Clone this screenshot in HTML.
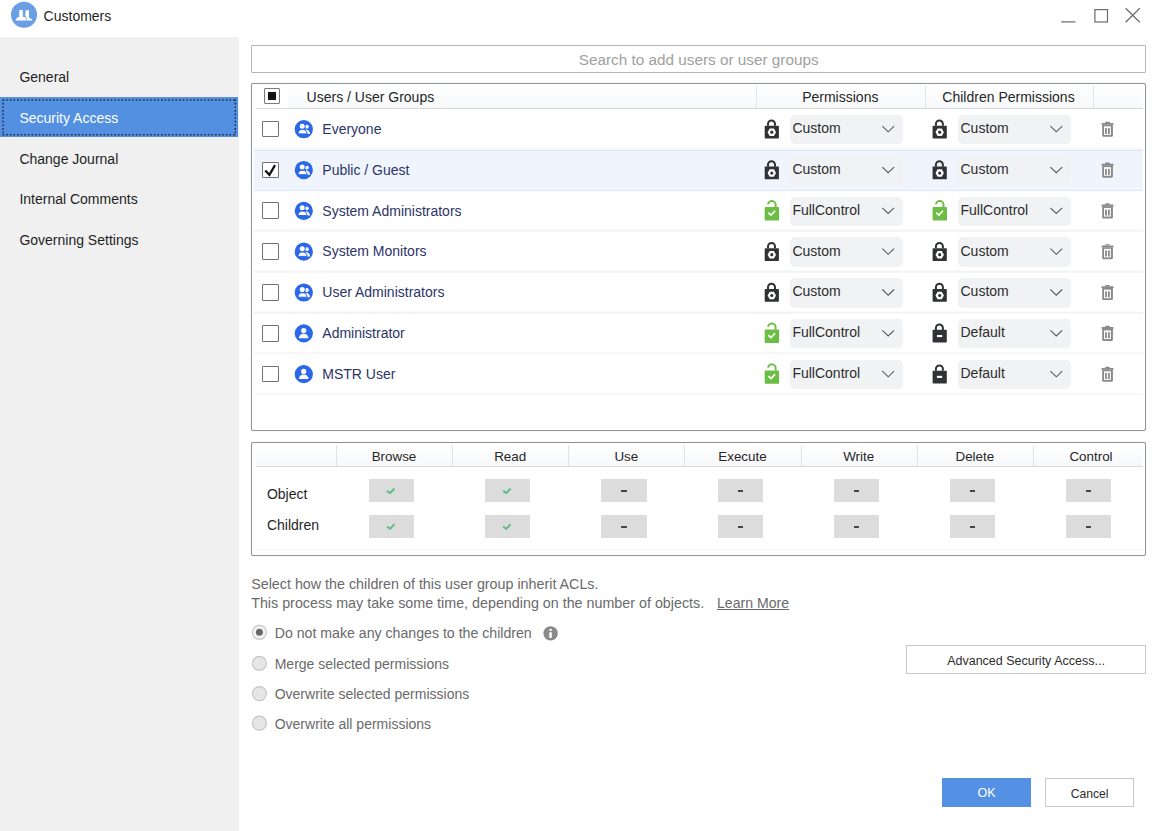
<!DOCTYPE html>
<html><head><meta charset="utf-8"><title>Customers</title>
<style>
html,body{margin:0;padding:0;}
body{width:1157px;height:831px;position:relative;overflow:hidden;background:#fff;font-family:"Liberation Sans", sans-serif;}
.t{position:absolute;white-space:nowrap;}
.b{position:absolute;}
</style></head><body>
<div class="t" style="left:43.60px;top:9.45px;font-size:14px;line-height:14px;color:#1e1e1e;">Customers</div>
<div class="b" style="left:0.00px;top:37.00px;width:239.00px;height:794.00px;background:#f0f0f0"></div>
<div class="b" style="left:0.00px;top:97.00px;width:238.00px;height:40.00px;background:#5390e2"></div>
<div class="t" style="left:19.40px;top:70.25px;font-size:14px;line-height:14px;color:#1f1f1f;">General</div>
<div class="t" style="left:19.40px;top:111.45px;font-size:14px;line-height:14px;color:#ffffff;">Security Access</div>
<div class="t" style="left:19.40px;top:151.95px;font-size:14px;line-height:14px;color:#1f1f1f;">Change Journal</div>
<div class="t" style="left:19.40px;top:192.35px;font-size:14px;line-height:14px;color:#1f1f1f;">Internal Comments</div>
<div class="t" style="left:19.40px;top:232.75px;font-size:14px;line-height:14px;color:#1f1f1f;">Governing Settings</div>
<div class="b" style="left:251.00px;top:45.00px;width:895.00px;height:28.00px;border:1px solid #b4b6ba;border-radius:1px;box-sizing:border-box;background:#fff"></div>
<div class="t" style="left:398.70px;width:600px;text-align:center;top:52.45px;font-size:15.3px;line-height:15.3px;color:#a0a0a0;">Search to add users or user groups</div>
<div class="b" style="left:251.00px;top:82.50px;width:895.00px;height:348.00px;border:1px solid #90949b;border-radius:2px;box-sizing:border-box;background:#fff;box-shadow:0 0 0.8px rgba(150,155,165,0.6)"></div>
<div class="b" style="left:288.00px;top:85.00px;width:855.00px;height:23.00px;background:linear-gradient(#ffffff,#f7f8fa)"></div>
<div class="b" style="left:256.00px;top:107.60px;width:887.00px;height:1.20px;background:#d6d7d9"></div>
<div class="b" style="left:756.30px;top:86.00px;width:1.00px;height:21.60px;background:#e3e4e6"></div>
<div class="b" style="left:924.60px;top:86.00px;width:1.00px;height:21.60px;background:#e3e4e6"></div>
<div class="b" style="left:1092.50px;top:86.00px;width:1.00px;height:21.60px;background:#e3e4e6"></div>
<div class="b" style="left:264.20px;top:88.30px;width:15.40px;height:15.40px;border:1.3px solid #7a7a7a;border-radius:1px;box-sizing:border-box;background:#fff"></div>
<div class="b" style="left:268.00px;top:92.10px;width:8.00px;height:8.10px;background:#141414"></div>
<div class="t" style="left:306.60px;top:89.75px;font-size:14px;line-height:14px;color:#262626;">Users / User Groups</div>
<div class="t" style="left:540.30px;width:600px;text-align:center;top:89.95px;font-size:14px;line-height:14px;color:#262626;">Permissions</div>
<div class="t" style="left:708.50px;width:600px;text-align:center;top:89.95px;font-size:14px;line-height:14px;color:#262626;">Children Permissions</div>
<div class="b" style="left:254.00px;top:147.63px;width:889.00px;height:2.70px;background:linear-gradient(#fefefe,#f2f2f2 55%,#f9f9f9)"></div>
<div class="b" style="left:261.70px;top:120.70px;width:17.10px;height:16.80px;border:1.4px solid #727272;border-radius:1px;box-sizing:border-box;background:#fff"></div>
<div class="t" style="left:322.30px;top:121.95px;font-size:14px;line-height:14px;color:#2b3468;">Everyone</div>
<div class="b" style="left:789.80px;top:115.00px;width:113.20px;height:29.20px;background:#f1f2f4;border-radius:5px"></div>
<div class="t" style="left:792.40px;top:121.05px;font-size:14px;line-height:14px;color:#2d2d2d;">Custom</div>
<div class="b" style="left:957.90px;top:115.00px;width:113.20px;height:29.20px;background:#f1f2f4;border-radius:5px"></div>
<div class="t" style="left:960.50px;top:121.05px;font-size:14px;line-height:14px;color:#2d2d2d;">Custom</div>
<div class="b" style="left:254.00px;top:149.53px;width:889.00px;height:41.03px;background:#f0f5fd;border-top:1px solid #dce8f8;border-bottom:1px solid #dce8f8;box-sizing:border-box"></div>
<div class="b" style="left:261.70px;top:161.53px;width:17.10px;height:16.80px;border:1.4px solid #727272;border-radius:1px;box-sizing:border-box;background:#fff"></div>
<div class="t" style="left:322.30px;top:162.78px;font-size:14px;line-height:14px;color:#2b3468;">Public / Guest</div>
<div class="b" style="left:789.80px;top:155.83px;width:113.20px;height:29.20px;background:#f1f2f4;border-radius:5px"></div>
<div class="t" style="left:792.40px;top:161.88px;font-size:14px;line-height:14px;color:#2d2d2d;">Custom</div>
<div class="b" style="left:957.90px;top:155.83px;width:113.20px;height:29.20px;background:#f1f2f4;border-radius:5px"></div>
<div class="t" style="left:960.50px;top:161.88px;font-size:14px;line-height:14px;color:#2d2d2d;">Custom</div>
<div class="b" style="left:254.00px;top:229.29px;width:889.00px;height:2.70px;background:linear-gradient(#fefefe,#f2f2f2 55%,#f9f9f9)"></div>
<div class="b" style="left:261.70px;top:202.36px;width:17.10px;height:16.80px;border:1.4px solid #727272;border-radius:1px;box-sizing:border-box;background:#fff"></div>
<div class="t" style="left:322.30px;top:203.61px;font-size:14px;line-height:14px;color:#2b3468;">System Administrators</div>
<div class="b" style="left:789.80px;top:196.66px;width:113.20px;height:29.20px;background:#f1f2f4;border-radius:5px"></div>
<div class="t" style="left:792.40px;top:202.71px;font-size:14px;line-height:14px;color:#2d2d2d;">FullControl</div>
<div class="b" style="left:957.90px;top:196.66px;width:113.20px;height:29.20px;background:#f1f2f4;border-radius:5px"></div>
<div class="t" style="left:960.50px;top:202.71px;font-size:14px;line-height:14px;color:#2d2d2d;">FullControl</div>
<div class="b" style="left:254.00px;top:270.12px;width:889.00px;height:2.70px;background:linear-gradient(#fefefe,#f2f2f2 55%,#f9f9f9)"></div>
<div class="b" style="left:261.70px;top:243.19px;width:17.10px;height:16.80px;border:1.4px solid #727272;border-radius:1px;box-sizing:border-box;background:#fff"></div>
<div class="t" style="left:322.30px;top:244.44px;font-size:14px;line-height:14px;color:#2b3468;">System Monitors</div>
<div class="b" style="left:789.80px;top:237.49px;width:113.20px;height:29.20px;background:#f1f2f4;border-radius:5px"></div>
<div class="t" style="left:792.40px;top:243.54px;font-size:14px;line-height:14px;color:#2d2d2d;">Custom</div>
<div class="b" style="left:957.90px;top:237.49px;width:113.20px;height:29.20px;background:#f1f2f4;border-radius:5px"></div>
<div class="t" style="left:960.50px;top:243.54px;font-size:14px;line-height:14px;color:#2d2d2d;">Custom</div>
<div class="b" style="left:254.00px;top:310.95px;width:889.00px;height:2.70px;background:linear-gradient(#fefefe,#f2f2f2 55%,#f9f9f9)"></div>
<div class="b" style="left:261.70px;top:284.02px;width:17.10px;height:16.80px;border:1.4px solid #727272;border-radius:1px;box-sizing:border-box;background:#fff"></div>
<div class="t" style="left:322.30px;top:285.27px;font-size:14px;line-height:14px;color:#2b3468;">User Administrators</div>
<div class="b" style="left:789.80px;top:278.32px;width:113.20px;height:29.20px;background:#f1f2f4;border-radius:5px"></div>
<div class="t" style="left:792.40px;top:284.37px;font-size:14px;line-height:14px;color:#2d2d2d;">Custom</div>
<div class="b" style="left:957.90px;top:278.32px;width:113.20px;height:29.20px;background:#f1f2f4;border-radius:5px"></div>
<div class="t" style="left:960.50px;top:284.37px;font-size:14px;line-height:14px;color:#2d2d2d;">Custom</div>
<div class="b" style="left:254.00px;top:351.78px;width:889.00px;height:2.70px;background:linear-gradient(#fefefe,#f2f2f2 55%,#f9f9f9)"></div>
<div class="b" style="left:261.70px;top:324.85px;width:17.10px;height:16.80px;border:1.4px solid #727272;border-radius:1px;box-sizing:border-box;background:#fff"></div>
<div class="t" style="left:322.30px;top:326.10px;font-size:14px;line-height:14px;color:#2b3468;">Administrator</div>
<div class="b" style="left:789.80px;top:319.15px;width:113.20px;height:29.20px;background:#f1f2f4;border-radius:5px"></div>
<div class="t" style="left:792.40px;top:325.20px;font-size:14px;line-height:14px;color:#2d2d2d;">FullControl</div>
<div class="b" style="left:957.90px;top:319.15px;width:113.20px;height:29.20px;background:#f1f2f4;border-radius:5px"></div>
<div class="t" style="left:960.50px;top:325.20px;font-size:14px;line-height:14px;color:#2d2d2d;">Default</div>
<div class="b" style="left:254.00px;top:392.61px;width:889.00px;height:2.70px;background:linear-gradient(#fefefe,#f2f2f2 55%,#f9f9f9)"></div>
<div class="b" style="left:261.70px;top:365.68px;width:17.10px;height:16.80px;border:1.4px solid #727272;border-radius:1px;box-sizing:border-box;background:#fff"></div>
<div class="t" style="left:322.30px;top:366.93px;font-size:14px;line-height:14px;color:#2b3468;">MSTR User</div>
<div class="b" style="left:789.80px;top:359.98px;width:113.20px;height:29.20px;background:#f1f2f4;border-radius:5px"></div>
<div class="t" style="left:792.40px;top:366.03px;font-size:14px;line-height:14px;color:#2d2d2d;">FullControl</div>
<div class="b" style="left:957.90px;top:359.98px;width:113.20px;height:29.20px;background:#f1f2f4;border-radius:5px"></div>
<div class="t" style="left:960.50px;top:366.03px;font-size:14px;line-height:14px;color:#2d2d2d;">Default</div>
<div class="b" style="left:251.00px;top:442.00px;width:895.00px;height:114.00px;border:1px solid #90949b;border-radius:2px;box-sizing:border-box;background:#fff;box-shadow:0 0 0.8px rgba(150,155,165,0.6)"></div>
<div class="b" style="left:255.50px;top:445.00px;width:887.50px;height:21.50px;background:linear-gradient(#ffffff,#f6f7f9)"></div>
<div class="b" style="left:255.50px;top:466.30px;width:887.50px;height:1.20px;background:#d9dadc"></div>
<div class="b" style="left:335.90px;top:444.60px;width:1.00px;height:21.70px;background:#e1e2e4"></div>
<div class="t" style="left:93.98px;width:600px;text-align:center;top:450.36px;font-size:13.4px;line-height:13.4px;color:#262626;">Browse</div>
<div class="b" style="left:368.98px;top:478.80px;width:45.20px;height:23.40px;background:#dcdcdc"></div>
<div class="b" style="left:368.98px;top:514.50px;width:45.20px;height:23.40px;background:#dcdcdc"></div>
<div class="b" style="left:452.07px;top:444.60px;width:1.00px;height:21.70px;background:#e1e2e4"></div>
<div class="t" style="left:210.15px;width:600px;text-align:center;top:450.36px;font-size:13.4px;line-height:13.4px;color:#262626;">Read</div>
<div class="b" style="left:485.15px;top:478.80px;width:45.20px;height:23.40px;background:#dcdcdc"></div>
<div class="b" style="left:485.15px;top:514.50px;width:45.20px;height:23.40px;background:#dcdcdc"></div>
<div class="b" style="left:568.24px;top:444.60px;width:1.00px;height:21.70px;background:#e1e2e4"></div>
<div class="t" style="left:326.33px;width:600px;text-align:center;top:450.36px;font-size:13.4px;line-height:13.4px;color:#262626;">Use</div>
<div class="b" style="left:601.33px;top:478.80px;width:45.20px;height:23.40px;background:#dcdcdc"></div>
<div class="b" style="left:621.33px;top:490.40px;width:5.40px;height:1.70px;background:#454545"></div>
<div class="b" style="left:601.33px;top:514.50px;width:45.20px;height:23.40px;background:#dcdcdc"></div>
<div class="b" style="left:621.33px;top:526.10px;width:5.40px;height:1.70px;background:#454545"></div>
<div class="b" style="left:684.41px;top:444.60px;width:1.00px;height:21.70px;background:#e1e2e4"></div>
<div class="t" style="left:442.50px;width:600px;text-align:center;top:450.36px;font-size:13.4px;line-height:13.4px;color:#262626;">Execute</div>
<div class="b" style="left:717.50px;top:478.80px;width:45.20px;height:23.40px;background:#dcdcdc"></div>
<div class="b" style="left:737.50px;top:490.40px;width:5.40px;height:1.70px;background:#454545"></div>
<div class="b" style="left:717.50px;top:514.50px;width:45.20px;height:23.40px;background:#dcdcdc"></div>
<div class="b" style="left:737.50px;top:526.10px;width:5.40px;height:1.70px;background:#454545"></div>
<div class="b" style="left:800.58px;top:444.60px;width:1.00px;height:21.70px;background:#e1e2e4"></div>
<div class="t" style="left:558.66px;width:600px;text-align:center;top:450.36px;font-size:13.4px;line-height:13.4px;color:#262626;">Write</div>
<div class="b" style="left:833.66px;top:478.80px;width:45.20px;height:23.40px;background:#dcdcdc"></div>
<div class="b" style="left:853.66px;top:490.40px;width:5.40px;height:1.70px;background:#454545"></div>
<div class="b" style="left:833.66px;top:514.50px;width:45.20px;height:23.40px;background:#dcdcdc"></div>
<div class="b" style="left:853.66px;top:526.10px;width:5.40px;height:1.70px;background:#454545"></div>
<div class="b" style="left:916.75px;top:444.60px;width:1.00px;height:21.70px;background:#e1e2e4"></div>
<div class="t" style="left:674.84px;width:600px;text-align:center;top:450.36px;font-size:13.4px;line-height:13.4px;color:#262626;">Delete</div>
<div class="b" style="left:949.84px;top:478.80px;width:45.20px;height:23.40px;background:#dcdcdc"></div>
<div class="b" style="left:969.84px;top:490.40px;width:5.40px;height:1.70px;background:#454545"></div>
<div class="b" style="left:949.84px;top:514.50px;width:45.20px;height:23.40px;background:#dcdcdc"></div>
<div class="b" style="left:969.84px;top:526.10px;width:5.40px;height:1.70px;background:#454545"></div>
<div class="b" style="left:1032.92px;top:444.60px;width:1.00px;height:21.70px;background:#e1e2e4"></div>
<div class="t" style="left:791.01px;width:600px;text-align:center;top:450.36px;font-size:13.4px;line-height:13.4px;color:#262626;">Control</div>
<div class="b" style="left:1066.01px;top:478.80px;width:45.20px;height:23.40px;background:#dcdcdc"></div>
<div class="b" style="left:1086.01px;top:490.40px;width:5.40px;height:1.70px;background:#454545"></div>
<div class="b" style="left:1066.01px;top:514.50px;width:45.20px;height:23.40px;background:#dcdcdc"></div>
<div class="b" style="left:1086.01px;top:526.10px;width:5.40px;height:1.70px;background:#454545"></div>
<div class="b" style="left:255.50px;top:548.50px;width:887.50px;height:1.00px;background:#f4f4f5"></div>
<div class="t" style="left:266.90px;top:486.85px;font-size:14px;line-height:14px;color:#1f1f1f;">Object</div>
<div class="t" style="left:266.90px;top:518.25px;font-size:14px;line-height:14px;color:#1f1f1f;">Children</div>
<div class="t" style="left:251.20px;top:576.60px;font-size:14.3px;line-height:14.3px;color:#6a6a6a;">Select how the children of this user group inherit ACLs.</div>
<div class="t" style="left:251.20px;top:595.50px;font-size:14.3px;line-height:14.3px;color:#6a6a6a;">This process may take some time, depending on the number of objects.</div>
<div class="t" style="left:717.00px;top:595.66px;font-size:14.1px;line-height:14.1px;color:#6a6a6a;text-decoration:underline;">Learn More</div>
<div class="t" style="left:274.70px;top:625.82px;font-size:14.15px;line-height:14.15px;color:#6a6a6a;">Do not make any changes to the children</div>
<div class="t" style="left:274.70px;top:656.85px;font-size:14px;line-height:14px;color:#6a6a6a;">Merge selected permissions</div>
<div class="t" style="left:274.70px;top:687.15px;font-size:14px;line-height:14px;color:#6a6a6a;">Overwrite selected permissions</div>
<div class="t" style="left:274.70px;top:716.65px;font-size:14px;line-height:14px;color:#6a6a6a;">Overwrite all permissions</div>
<div class="b" style="left:906.20px;top:644.70px;width:239.40px;height:28.90px;border:1px solid #c9c9c9;box-sizing:border-box;background:#fff"></div>
<div class="t" style="left:726.00px;width:600px;text-align:center;top:654.52px;font-size:12.5px;line-height:12.5px;color:#2d2d2d;">Advanced Security Access...</div>
<div class="b" style="left:942.10px;top:777.60px;width:88.60px;height:29.60px;background:#5490e3"></div>
<div class="t" style="left:686.60px;width:600px;text-align:center;top:787.43px;font-size:12.6px;line-height:12.6px;color:#ffffff;">OK</div>
<div class="b" style="left:1045.20px;top:777.60px;width:88.70px;height:29.60px;border:1px solid #c9c9c9;box-sizing:border-box;background:#fff"></div>
<div class="t" style="left:789.60px;width:600px;text-align:center;top:787.77px;font-size:12.2px;line-height:12.2px;color:#2d2d2d;">Cancel</div>
<svg class="b" style="left:0;top:0" width="1157" height="831" viewBox="0 0 1157 831">
<circle cx="24" cy="14.8" r="13" fill="#6a9ee5"/>
<rect x="19.2" y="10" width="3.7" height="8" rx="1" fill="#fff"/>
<path d="M25.6 10.2h3.4v8.3h-3.6v-3.2q-1 -0.8 0.2 -2z" fill="#fff"/>
<path d="M15.6 20.5Q16.2 17.4 19.5 17h5.6q1.2 0.2 1.4 1h2.8q2.6 0.3 3.2 2.5z" fill="#fff"/>
<path d="M25.4 16.2L26.7 19.6" stroke="#6a9ee5" stroke-width="0.9"/>
<path d="M1061.2 21.9h14.3" stroke="#6b6b6b" stroke-width="1.2"/>
<rect x="1094.9" y="9.6" width="12.6" height="12.4" fill="none" stroke="#6b6b6b" stroke-width="1.2"/>
<path d="M1125.6 8.2L1139.8 22.2M1139.8 8.2L1125.6 22.2" stroke="#6b6b6b" stroke-width="1.2"/>
<path d="M2.6 99.9H236M2.6 134.8H236M3.1 99.2V135.5M235.3 99.2V135.5" fill="none" stroke="#27324a" stroke-width="1.5" stroke-dasharray="1.7 1.9"/>
<circle cx="303.8" cy="129.20" r="9.1" fill="#2b67e9"/>
<circle cx="306.9" cy="126.70" r="1.9" fill="#fff"/>
<path d="M304.5 133.90H310Q309.8 130.10 306 129.50Z" fill="#fff"/>
<circle cx="302.2" cy="126.20" r="3.4" fill="#2b67e9"/>
<circle cx="302.2" cy="126.20" r="2.5" fill="#fff"/>
<path d="M297.9 133.90Q298.3 129.50 302.5 129.40Q306.7 129.50 307.2 133.90Z" fill="#fff" stroke="#2b67e9" stroke-width="1"/>
<path d="M882.30 126.20l5.9 5.6l5.9 -5.6" fill="none" stroke="#5a5a5a" stroke-width="1.1"/>
<path d="M768.00 125.80V123.90a3.5 3.5 0 0 1 7 0V125.80" fill="none" stroke="#313235" stroke-width="2"/>
<rect x="764.70" y="125.70" width="14.2" height="12.8" rx="0.7" fill="#313235"/>
<path d="M767.60 132.20L769.70 128.50H773.90L776.00 132.20L773.90 135.90H769.70Z" fill="#fff"/>
<circle cx="771.80" cy="132.20" r="1.6" fill="#313235"/>
<path d="M1050.40 126.20l5.9 5.6l5.9 -5.6" fill="none" stroke="#5a5a5a" stroke-width="1.1"/>
<path d="M935.90 125.80V123.90a3.5 3.5 0 0 1 7 0V125.80" fill="none" stroke="#313235" stroke-width="2"/>
<rect x="932.60" y="125.70" width="14.2" height="12.8" rx="0.7" fill="#313235"/>
<path d="M935.50 132.20L937.60 128.50H941.80L943.90 132.20L941.80 135.90H937.60Z" fill="#fff"/>
<circle cx="939.70" cy="132.20" r="1.6" fill="#313235"/>
<rect x="1105.1" y="121.70" width="4.7" height="1.4" rx="0.5" fill="#8a8a8a"/>
<rect x="1101.5" y="122.90" width="12.1" height="1.9" rx="0.6" fill="#8a8a8a"/>
<path d="M1102.2 124.70H1112.9V135.50a1.3 1.3 0 0 1 -1.3 1.3H1103.5a1.3 1.3 0 0 1 -1.3 -1.3Z" fill="#8a8a8a"/>
<rect x="1104" y="126.30" width="6.9" height="8.6" fill="#fff"/>
<rect x="1105.1" y="128.00" width="1.8" height="6" fill="#8a8a8a"/>
<rect x="1108" y="128.00" width="1.8" height="6" fill="#8a8a8a"/>
<path d="M265.3 170.53L269.4 174.83L275 165.13" fill="none" stroke="#111" stroke-width="2.2"/>
<circle cx="303.8" cy="170.03" r="9.1" fill="#2b67e9"/>
<circle cx="306.9" cy="167.53" r="1.9" fill="#fff"/>
<path d="M304.5 174.73H310Q309.8 170.93 306 170.33Z" fill="#fff"/>
<circle cx="302.2" cy="167.03" r="3.4" fill="#2b67e9"/>
<circle cx="302.2" cy="167.03" r="2.5" fill="#fff"/>
<path d="M297.9 174.73Q298.3 170.33 302.5 170.23Q306.7 170.33 307.2 174.73Z" fill="#fff" stroke="#2b67e9" stroke-width="1"/>
<path d="M882.30 167.03l5.9 5.6l5.9 -5.6" fill="none" stroke="#5a5a5a" stroke-width="1.1"/>
<path d="M768.00 166.63V164.73a3.5 3.5 0 0 1 7 0V166.63" fill="none" stroke="#313235" stroke-width="2"/>
<rect x="764.70" y="166.53" width="14.2" height="12.8" rx="0.7" fill="#313235"/>
<path d="M767.60 173.03L769.70 169.33H773.90L776.00 173.03L773.90 176.73H769.70Z" fill="#fff"/>
<circle cx="771.80" cy="173.03" r="1.6" fill="#313235"/>
<path d="M1050.40 167.03l5.9 5.6l5.9 -5.6" fill="none" stroke="#5a5a5a" stroke-width="1.1"/>
<path d="M935.90 166.63V164.73a3.5 3.5 0 0 1 7 0V166.63" fill="none" stroke="#313235" stroke-width="2"/>
<rect x="932.60" y="166.53" width="14.2" height="12.8" rx="0.7" fill="#313235"/>
<path d="M935.50 173.03L937.60 169.33H941.80L943.90 173.03L941.80 176.73H937.60Z" fill="#fff"/>
<circle cx="939.70" cy="173.03" r="1.6" fill="#313235"/>
<rect x="1105.1" y="162.53" width="4.7" height="1.4" rx="0.5" fill="#8a8a8a"/>
<rect x="1101.5" y="163.73" width="12.1" height="1.9" rx="0.6" fill="#8a8a8a"/>
<path d="M1102.2 165.53H1112.9V176.33a1.3 1.3 0 0 1 -1.3 1.3H1103.5a1.3 1.3 0 0 1 -1.3 -1.3Z" fill="#8a8a8a"/>
<rect x="1104" y="167.13" width="6.9" height="8.6" fill="#fff"/>
<rect x="1105.1" y="168.83" width="1.8" height="6" fill="#8a8a8a"/>
<rect x="1108" y="168.83" width="1.8" height="6" fill="#8a8a8a"/>
<circle cx="303.8" cy="210.86" r="9.1" fill="#2b67e9"/>
<circle cx="306.9" cy="208.36" r="1.9" fill="#fff"/>
<path d="M304.5 215.56H310Q309.8 211.76 306 211.16Z" fill="#fff"/>
<circle cx="302.2" cy="207.86" r="3.4" fill="#2b67e9"/>
<circle cx="302.2" cy="207.86" r="2.5" fill="#fff"/>
<path d="M297.9 215.56Q298.3 211.16 302.5 211.06Q306.7 211.16 307.2 215.56Z" fill="#fff" stroke="#2b67e9" stroke-width="1"/>
<path d="M882.30 207.86l5.9 5.6l5.9 -5.6" fill="none" stroke="#5a5a5a" stroke-width="1.1"/>
<path d="M768.00 204.26A3.7 3.7 0 0 1 775.60 205.46V207.26" fill="none" stroke="#6cbd44" stroke-width="2"/>
<rect x="764.70" y="207.06" width="14.4" height="13.4" rx="0.7" fill="#6cbd44"/>
<path d="M768.30 212.76L771.00 215.16L775.10 210.76" fill="none" stroke="#fff" stroke-width="1.7"/>
<path d="M1050.40 207.86l5.9 5.6l5.9 -5.6" fill="none" stroke="#5a5a5a" stroke-width="1.1"/>
<path d="M935.90 204.26A3.7 3.7 0 0 1 943.50 205.46V207.26" fill="none" stroke="#6cbd44" stroke-width="2"/>
<rect x="932.60" y="207.06" width="14.4" height="13.4" rx="0.7" fill="#6cbd44"/>
<path d="M936.20 212.76L938.90 215.16L943.00 210.76" fill="none" stroke="#fff" stroke-width="1.7"/>
<rect x="1105.1" y="203.36" width="4.7" height="1.4" rx="0.5" fill="#8a8a8a"/>
<rect x="1101.5" y="204.56" width="12.1" height="1.9" rx="0.6" fill="#8a8a8a"/>
<path d="M1102.2 206.36H1112.9V217.16a1.3 1.3 0 0 1 -1.3 1.3H1103.5a1.3 1.3 0 0 1 -1.3 -1.3Z" fill="#8a8a8a"/>
<rect x="1104" y="207.96" width="6.9" height="8.6" fill="#fff"/>
<rect x="1105.1" y="209.66" width="1.8" height="6" fill="#8a8a8a"/>
<rect x="1108" y="209.66" width="1.8" height="6" fill="#8a8a8a"/>
<circle cx="303.8" cy="251.69" r="9.1" fill="#2b67e9"/>
<circle cx="306.9" cy="249.19" r="1.9" fill="#fff"/>
<path d="M304.5 256.39H310Q309.8 252.59 306 251.99Z" fill="#fff"/>
<circle cx="302.2" cy="248.69" r="3.4" fill="#2b67e9"/>
<circle cx="302.2" cy="248.69" r="2.5" fill="#fff"/>
<path d="M297.9 256.39Q298.3 251.99 302.5 251.89Q306.7 251.99 307.2 256.39Z" fill="#fff" stroke="#2b67e9" stroke-width="1"/>
<path d="M882.30 248.69l5.9 5.6l5.9 -5.6" fill="none" stroke="#5a5a5a" stroke-width="1.1"/>
<path d="M768.00 248.29V246.39a3.5 3.5 0 0 1 7 0V248.29" fill="none" stroke="#313235" stroke-width="2"/>
<rect x="764.70" y="248.19" width="14.2" height="12.8" rx="0.7" fill="#313235"/>
<path d="M767.60 254.69L769.70 250.99H773.90L776.00 254.69L773.90 258.39H769.70Z" fill="#fff"/>
<circle cx="771.80" cy="254.69" r="1.6" fill="#313235"/>
<path d="M1050.40 248.69l5.9 5.6l5.9 -5.6" fill="none" stroke="#5a5a5a" stroke-width="1.1"/>
<path d="M935.90 248.29V246.39a3.5 3.5 0 0 1 7 0V248.29" fill="none" stroke="#313235" stroke-width="2"/>
<rect x="932.60" y="248.19" width="14.2" height="12.8" rx="0.7" fill="#313235"/>
<path d="M935.50 254.69L937.60 250.99H941.80L943.90 254.69L941.80 258.39H937.60Z" fill="#fff"/>
<circle cx="939.70" cy="254.69" r="1.6" fill="#313235"/>
<rect x="1105.1" y="244.19" width="4.7" height="1.4" rx="0.5" fill="#8a8a8a"/>
<rect x="1101.5" y="245.39" width="12.1" height="1.9" rx="0.6" fill="#8a8a8a"/>
<path d="M1102.2 247.19H1112.9V257.99a1.3 1.3 0 0 1 -1.3 1.3H1103.5a1.3 1.3 0 0 1 -1.3 -1.3Z" fill="#8a8a8a"/>
<rect x="1104" y="248.79" width="6.9" height="8.6" fill="#fff"/>
<rect x="1105.1" y="250.49" width="1.8" height="6" fill="#8a8a8a"/>
<rect x="1108" y="250.49" width="1.8" height="6" fill="#8a8a8a"/>
<circle cx="303.8" cy="292.52" r="9.1" fill="#2b67e9"/>
<circle cx="306.9" cy="290.02" r="1.9" fill="#fff"/>
<path d="M304.5 297.22H310Q309.8 293.42 306 292.82Z" fill="#fff"/>
<circle cx="302.2" cy="289.52" r="3.4" fill="#2b67e9"/>
<circle cx="302.2" cy="289.52" r="2.5" fill="#fff"/>
<path d="M297.9 297.22Q298.3 292.82 302.5 292.72Q306.7 292.82 307.2 297.22Z" fill="#fff" stroke="#2b67e9" stroke-width="1"/>
<path d="M882.30 289.52l5.9 5.6l5.9 -5.6" fill="none" stroke="#5a5a5a" stroke-width="1.1"/>
<path d="M768.00 289.12V287.22a3.5 3.5 0 0 1 7 0V289.12" fill="none" stroke="#313235" stroke-width="2"/>
<rect x="764.70" y="289.02" width="14.2" height="12.8" rx="0.7" fill="#313235"/>
<path d="M767.60 295.52L769.70 291.82H773.90L776.00 295.52L773.90 299.22H769.70Z" fill="#fff"/>
<circle cx="771.80" cy="295.52" r="1.6" fill="#313235"/>
<path d="M1050.40 289.52l5.9 5.6l5.9 -5.6" fill="none" stroke="#5a5a5a" stroke-width="1.1"/>
<path d="M935.90 289.12V287.22a3.5 3.5 0 0 1 7 0V289.12" fill="none" stroke="#313235" stroke-width="2"/>
<rect x="932.60" y="289.02" width="14.2" height="12.8" rx="0.7" fill="#313235"/>
<path d="M935.50 295.52L937.60 291.82H941.80L943.90 295.52L941.80 299.22H937.60Z" fill="#fff"/>
<circle cx="939.70" cy="295.52" r="1.6" fill="#313235"/>
<rect x="1105.1" y="285.02" width="4.7" height="1.4" rx="0.5" fill="#8a8a8a"/>
<rect x="1101.5" y="286.22" width="12.1" height="1.9" rx="0.6" fill="#8a8a8a"/>
<path d="M1102.2 288.02H1112.9V298.82a1.3 1.3 0 0 1 -1.3 1.3H1103.5a1.3 1.3 0 0 1 -1.3 -1.3Z" fill="#8a8a8a"/>
<rect x="1104" y="289.62" width="6.9" height="8.6" fill="#fff"/>
<rect x="1105.1" y="291.32" width="1.8" height="6" fill="#8a8a8a"/>
<rect x="1108" y="291.32" width="1.8" height="6" fill="#8a8a8a"/>
<circle cx="303.8" cy="333.35" r="9.1" fill="#2b67e9"/>
<circle cx="303.7" cy="330.55" r="2.6" fill="#fff"/>
<path d="M298.9 338.15Q299.2 333.75 303.7 333.65Q308.2 333.75 308.5 338.15Z" fill="#fff"/>
<path d="M882.30 330.35l5.9 5.6l5.9 -5.6" fill="none" stroke="#5a5a5a" stroke-width="1.1"/>
<path d="M768.00 326.75A3.7 3.7 0 0 1 775.60 327.95V329.75" fill="none" stroke="#6cbd44" stroke-width="2"/>
<rect x="764.70" y="329.55" width="14.4" height="13.4" rx="0.7" fill="#6cbd44"/>
<path d="M768.30 335.25L771.00 337.65L775.10 333.25" fill="none" stroke="#fff" stroke-width="1.7"/>
<path d="M1050.40 330.35l5.9 5.6l5.9 -5.6" fill="none" stroke="#5a5a5a" stroke-width="1.1"/>
<path d="M935.90 329.95V328.05a3.5 3.5 0 0 1 7 0V329.95" fill="none" stroke="#313235" stroke-width="2"/>
<rect x="932.60" y="329.85" width="14.2" height="12.7" rx="0.7" fill="#313235"/>
<rect x="936.90" y="335.00" width="5.3" height="2.1" fill="#fff"/>
<rect x="1105.1" y="325.85" width="4.7" height="1.4" rx="0.5" fill="#8a8a8a"/>
<rect x="1101.5" y="327.05" width="12.1" height="1.9" rx="0.6" fill="#8a8a8a"/>
<path d="M1102.2 328.85H1112.9V339.65a1.3 1.3 0 0 1 -1.3 1.3H1103.5a1.3 1.3 0 0 1 -1.3 -1.3Z" fill="#8a8a8a"/>
<rect x="1104" y="330.45" width="6.9" height="8.6" fill="#fff"/>
<rect x="1105.1" y="332.15" width="1.8" height="6" fill="#8a8a8a"/>
<rect x="1108" y="332.15" width="1.8" height="6" fill="#8a8a8a"/>
<circle cx="303.8" cy="374.18" r="9.1" fill="#2b67e9"/>
<circle cx="303.7" cy="371.38" r="2.6" fill="#fff"/>
<path d="M298.9 378.98Q299.2 374.58 303.7 374.48Q308.2 374.58 308.5 378.98Z" fill="#fff"/>
<path d="M882.30 371.18l5.9 5.6l5.9 -5.6" fill="none" stroke="#5a5a5a" stroke-width="1.1"/>
<path d="M768.00 367.58A3.7 3.7 0 0 1 775.60 368.78V370.58" fill="none" stroke="#6cbd44" stroke-width="2"/>
<rect x="764.70" y="370.38" width="14.4" height="13.4" rx="0.7" fill="#6cbd44"/>
<path d="M768.30 376.08L771.00 378.48L775.10 374.08" fill="none" stroke="#fff" stroke-width="1.7"/>
<path d="M1050.40 371.18l5.9 5.6l5.9 -5.6" fill="none" stroke="#5a5a5a" stroke-width="1.1"/>
<path d="M935.90 370.78V368.88a3.5 3.5 0 0 1 7 0V370.78" fill="none" stroke="#313235" stroke-width="2"/>
<rect x="932.60" y="370.68" width="14.2" height="12.7" rx="0.7" fill="#313235"/>
<rect x="936.90" y="375.83" width="5.3" height="2.1" fill="#fff"/>
<rect x="1105.1" y="366.68" width="4.7" height="1.4" rx="0.5" fill="#8a8a8a"/>
<rect x="1101.5" y="367.88" width="12.1" height="1.9" rx="0.6" fill="#8a8a8a"/>
<path d="M1102.2 369.68H1112.9V380.48a1.3 1.3 0 0 1 -1.3 1.3H1103.5a1.3 1.3 0 0 1 -1.3 -1.3Z" fill="#8a8a8a"/>
<rect x="1104" y="371.28" width="6.9" height="8.6" fill="#fff"/>
<rect x="1105.1" y="372.98" width="1.8" height="6" fill="#8a8a8a"/>
<rect x="1108" y="372.98" width="1.8" height="6" fill="#8a8a8a"/>
<path d="M386.98 490.90L390.19 493.10L394.38 488.50" fill="none" stroke="#5bbd85" stroke-width="1.9"/>
<path d="M386.98 526.60L390.19 528.80L394.38 524.20" fill="none" stroke="#5bbd85" stroke-width="1.9"/>
<path d="M503.15 490.90L506.36 493.10L510.56 488.50" fill="none" stroke="#5bbd85" stroke-width="1.9"/>
<path d="M503.15 526.60L506.36 528.80L510.56 524.20" fill="none" stroke="#5bbd85" stroke-width="1.9"/>
<circle cx="259.4" cy="632.30" r="7" fill="#f3f3f3" stroke="#c5c5c5" stroke-width="1.2"/>
<circle cx="259.4" cy="632.30" r="3.5" fill="#686868"/>
<circle cx="259.4" cy="663.30" r="7" fill="#e6e6e6" stroke="#c5c5c5" stroke-width="1.2"/>
<circle cx="259.4" cy="693.60" r="7" fill="#e6e6e6" stroke="#c5c5c5" stroke-width="1.2"/>
<circle cx="259.4" cy="723.10" r="7" fill="#e6e6e6" stroke="#c5c5c5" stroke-width="1.2"/>
<circle cx="550.6" cy="633.4" r="7.2" fill="#8a8a8a"/>
<circle cx="550.6" cy="629.9" r="1.2" fill="#fff"/>
<path d="M549.3 632.3h2.5v5.6h-2.5z" fill="#fff"/>
</svg>
</body></html>
